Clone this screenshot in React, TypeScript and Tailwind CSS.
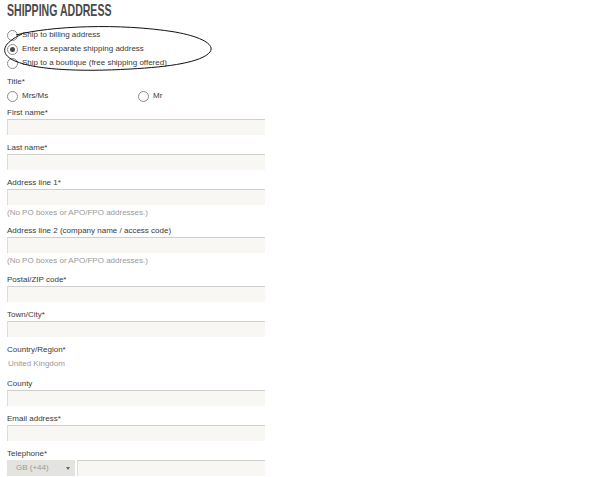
import React from "react";

const font = "font-['Liberation_Sans',Arial,sans-serif]";

function Radio({ checked = false }: { checked?: boolean }) {
  return (
    <span className="flex h-[11px] w-[11px] shrink-0 items-center justify-center rounded-full border border-[#8a8a8a] bg-white">
      {checked && <span className="h-[5px] w-[5px] rounded-full bg-[#4a4a4a]" />}
    </span>
  );
}

function Input({ className = "w-[258px]" }: { className?: string }) {
  return (
    <div
      className={`h-[16px] border-t border-l border-t-[#cfcfcb] border-l-[#dcdcd8] bg-[#f8f7f3] ${className}`}
    />
  );
}

function Label({ children }: { children: React.ReactNode }) {
  return <div className="h-[12px] leading-[12px] text-[#3a3a3a]">{children}</div>;
}

function Helper({ children, className = "" }: { children: React.ReactNode; className?: string }) {
  return <div className={`h-[12px] leading-[12px] text-[#9a9a9a] ${className}`}>{children}</div>;
}

function Field({ label, mb = "mb-[7px]" }: { label: string; mb?: string }) {
  return (
    <div className={mb}>
      <Label>{label}</Label>
      <Input />
    </div>
  );
}

export default function App() {
  return (
    <div className={`relative h-[477px] w-[600px] overflow-hidden bg-white pl-[7px] text-[8px] ${font}`}>
      <div className="h-[28px] pt-[1px]">
        <h1 className="origin-left scale-x-[0.62] whitespace-nowrap text-[17px] font-bold leading-[20px] text-[#4a4a4a]">
          SHIPPING ADDRESS
        </h1>
      </div>

      <div className="text-[#3a3a3a]">
        <div className="flex h-[14px] items-center gap-[4px]">
          <Radio />
          <span>Ship to billing address</span>
        </div>
        <div className="flex h-[14px] items-center gap-[4px]">
          <Radio checked />
          <span>Enter a separate shipping address</span>
        </div>
        <div className="flex h-[14px] items-center gap-[4px]">
          <Radio />
          <span>Ship to a boutique (free shipping offered)</span>
        </div>
      </div>

      <div className="mt-[6px]">
        <Label>Title*</Label>
        <div className="mt-[1px] flex h-[14px] items-center text-[#3a3a3a]">
          <div className="flex w-[131px] items-center gap-[4px]">
            <Radio />
            <span>Mrs/Ms</span>
          </div>
          <div className="flex items-center gap-[4px]">
            <Radio />
            <span>Mr</span>
          </div>
        </div>
      </div>

      <div className="mt-[4px]">
        <Field label="First name*" />
        <Field label="Last name*" />
        <div className="mb-[6px]">
          <Label>Address line 1*</Label>
          <Input />
          <Helper className="mt-[2px]">(No PO boxes or APO/FPO addresses.)</Helper>
        </div>
        <div className="mb-[7px]">
          <Label>Address line 2 (company name / access code)</Label>
          <Input />
          <Helper className="mt-[2px]">(No PO boxes or APO/FPO addresses.)</Helper>
        </div>
        <Field label="Postal/ZIP code*" />
        <Field label="Town/City*" />
        <div className="mb-[8px]">
          <Label>Country/Region*</Label>
          <Helper className="mt-[2px] pl-[1px]">United Kingdom</Helper>
        </div>
        <Field label="County" />
        <Field label="Email address*" />
        <div>
          <Label>Telephone*</Label>
          <div className="flex gap-[2px]">
            <div className="flex h-[16px] w-[68px] items-center justify-between bg-[#e3e3e0] pl-[9px] pr-[5px] text-[#9a9a9a]">
              <span>GB (+44)</span>
              <span className="h-0 w-0 border-x-[2.5px] border-t-[3px] border-x-transparent border-t-[#666]" />
            </div>
            <Input className="w-[188px]" />
          </div>
        </div>
      </div>

      <svg
        className="pointer-events-none absolute left-0 top-0"
        width="230"
        height="80"
        viewBox="0 0 230 80"
        fill="none"
      >
        <path
          d="M 16 35 C 50 26, 120 23, 175 32 C 203 37, 215 45, 210 52 C 202 62, 170 67, 130 69 C 80 72, 30 70, 11 59 C 0 52, 3 43, 22 34"
          stroke="#111"
          strokeWidth="1"
        />
      </svg>
    </div>
  );
}
